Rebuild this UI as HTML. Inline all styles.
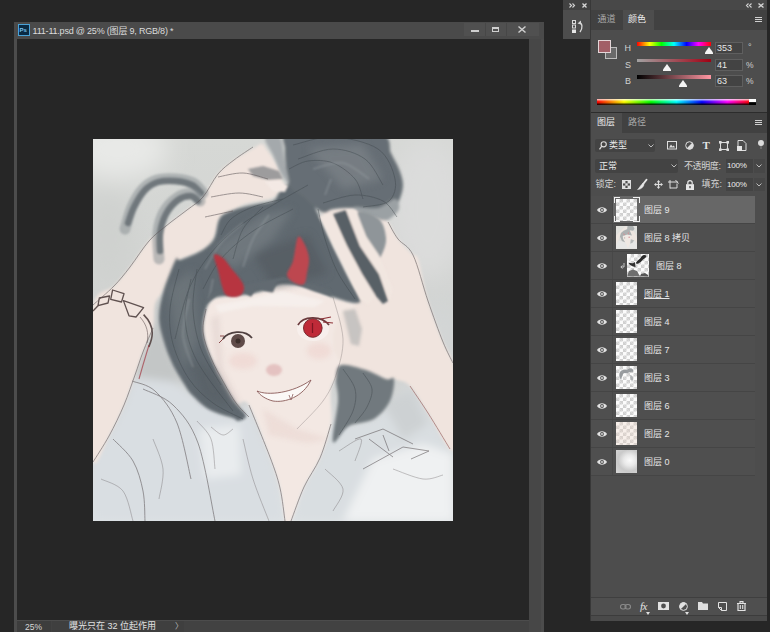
<!DOCTYPE html>
<html lang="zh">
<head>
<meta charset="utf-8">
<title>111-11.psd</title>
<style>
html,body{margin:0;padding:0;}
body{width:770px;height:632px;overflow:hidden;background:#262626;position:relative;
 font-family:"Liberation Sans","Noto Sans CJK SC",sans-serif;font-size:9px;color:#d6d6d6;}
.a{position:absolute;}
.t{position:absolute;white-space:nowrap;line-height:1;}
svg{position:absolute;overflow:visible;}
/* document window */
#win{left:14px;top:22px;width:530px;height:610px;background:#4c4c4c;}
#title{left:0;top:0;width:530px;height:17px;background:#4a4a4a;}
#canvas{left:3px;top:17px;width:512px;height:581px;background:#262626;}
#vscroll{left:515px;top:17px;width:12px;height:593px;background:#474747;}
#status{left:3px;top:598.5px;width:512px;height:12px;background:#424242;}
/* right dock */
#dock{left:590px;top:0;width:177px;height:621px;background:#4d4d4d;}
.tabbar{background:#414141;}
.row{left:0;width:165px;height:27px;background:#4f4f4f;border-bottom:1px solid #454545;}
.row.sel{background:#686868;}
.eye{left:7px;top:9px;width:10px;height:8px;}
.th{left:25.5px;top:2.5px;width:21.5px;height:22.5px;background:#f1f1f1;}
.ck{background-color:#fbfbfb;background-image:
 linear-gradient(45deg,#d0d0d0 25%,transparent 25%,transparent 75%,#d0d0d0 75%),
 linear-gradient(45deg,#d0d0d0 25%,transparent 25%,transparent 75%,#d0d0d0 75%);
 background-size:7px 7px;background-position:0 0,3.5px 3.5px;}
.nm{left:54px;top:10px;font-size:9px;color:#e6e6e6;}
.box{background:#434343;border:1px solid #5f5f5f;box-sizing:border-box;}
</style>
</head>
<body>

<!-- ================= document window ================= -->
<div id="win" class="a">
  <div id="title" class="a">
    <div class="a" style="left:4px;top:2px;width:10px;height:10px;background:#0a2a43;border:1px solid #4aa3d8;"></div>
    <div class="t" style="left:5.5px;top:5px;font-size:6px;color:#7cc4f0;font-weight:bold;">Ps</div>
    <div class="t" style="left:18.5px;top:5px;font-size:9px;color:#dcdcdc;letter-spacing:-0.2px;">111-11.psd @ 25% (图层 9, RGB/8) *</div>
    <!-- window buttons -->
    <div class="a" style="left:450px;top:1px;width:75px;height:13px;background:#505050;"></div>
    <div class="a" style="left:471px;top:1px;width:1px;height:13px;background:#474747;"></div>
    <div class="a" style="left:492px;top:1px;width:1px;height:13px;background:#474747;"></div>
    <div class="a" style="left:457px;top:8px;width:8px;height:2px;background:#cfcfcf;"></div>
    <div class="a" style="left:478px;top:5px;width:7px;height:5px;border:1px solid #cfcfcf;border-top-width:2px;box-sizing:border-box;"></div>
    <svg style="left:504px;top:4px;" width="8" height="7" viewBox="0 0 8 7"><path d="M0.5 0.5L7.5 6.5M7.5 0.5L0.5 6.5" stroke="#cfcfcf" stroke-width="1.5" fill="none"/></svg>
  </div>
  <div id="canvas" class="a"></div>
  <div id="vscroll" class="a"></div>
  <div id="status" class="a">
    <div class="a" style="left:0;top:0;width:34px;height:12px;background:#3d3d3d;"></div>
    <div class="a" style="left:35px;top:0;width:132px;height:12px;background:#3f3f3f;"></div>
    <div class="t" style="left:8px;top:2px;font-size:8.5px;color:#d8d8d8;">25%</div>
    <div class="t" style="left:52px;top:1.5px;font-size:9px;color:#e2e2e2;">曝光只在 32 位起作用</div>
    <div class="t" style="left:158px;top:2px;font-size:8px;color:#bdbdbd;">&#x232A;</div>
  </div>
</div>

<!-- ================= painting ================= -->
<svg id="art" style="left:93px;top:139px;overflow:hidden;" width="360" height="382" viewBox="0 0 360 382">
  <defs>
    <filter id="b0" x="-10%" y="-10%" width="120%" height="120%"><feGaussianBlur stdDeviation="0.45"/></filter>
    <filter id="b1" x="-10%" y="-10%" width="120%" height="120%"><feGaussianBlur stdDeviation="0.9"/></filter>
    <filter id="b2" x="-10%" y="-10%" width="120%" height="120%"><feGaussianBlur stdDeviation="1.5"/></filter>
    <filter id="b3" x="-20%" y="-20%" width="140%" height="140%"><feGaussianBlur stdDeviation="2.5"/></filter>
    <filter id="b4" x="-20%" y="-20%" width="140%" height="140%"><feGaussianBlur stdDeviation="4"/></filter>
    <filter id="b8" x="-30%" y="-30%" width="160%" height="160%"><feGaussianBlur stdDeviation="12"/></filter>
    <linearGradient id="bgg" x1="0" y1="0" x2="0" y2="1"><stop offset="0" stop-color="#d6d8d5"/><stop offset=".6" stop-color="#d0d2d1"/><stop offset="1" stop-color="#dfe3e5"/></linearGradient>
  </defs>
  <g id="artg">
  <rect width="360" height="382" fill="url(#bgg)"/>
  <g filter="url(#b8)">
    <ellipse cx="25" cy="10" rx="50" ry="30" fill="#e8e9e7"/>
    <ellipse cx="335" cy="70" rx="40" ry="70" fill="#dbdcdb"/>
    <ellipse cx="345" cy="220" rx="25" ry="60" fill="#d3d6d6"/>
    <ellipse cx="15" cy="100" rx="25" ry="50" fill="#cfd1cf"/>
  </g>
<g filter="url(#b4)">
<path d="M0 323L16 297L31 266L39 240L70 236L100 256L140 279L156 266L177 318L192 382H0Z" fill="#d9dee2"/>
<path d="M198 382L211 348L227 319L238 285L256 285L281 280L297 262L317 247L335 274L360 312V382Z" fill="#d9dee1"/>
<path d="M280 320L330 305L360 315V382H250Z" fill="#eff1f2"/>
<path d="M106 290L146 286L148 336L112 340Z" fill="#e9ecee"/>
<path d="M290 265L318 250L335 285L310 300Z" fill="#cdd1d3"/>
<path d="M62 165L72 150L68 180L73 205L90 244L42 238L50 213L60 189Z" fill="#c3c6c6"/>
</g>
<g filter="url(#b2)">
<path d="M0.0 166.0C4.8 148.8 14.8 153.3 21.0 147.0C27.2 140.7 31.2 135.5 37.0 128.0C42.8 120.5 50.0 108.8 56.0 102.0C62.0 95.2 66.7 92.2 73.0 87.0C79.3 81.8 87.8 75.8 94.0 71.0C100.2 66.2 104.8 64.0 110.0 58.0C115.2 52.0 119.8 41.2 125.0 35.0C130.2 28.8 135.0 25.3 141.0 21.0C147.0 16.7 156.3 11.7 161.0 9.0C165.7 6.3 166.8 4.7 169.0 5.0C171.2 5.3 171.7 7.8 174.0 11.0C176.3 14.2 180.7 19.8 183.0 24.0C185.3 28.2 187.0 32.3 188.0 36.0C189.0 39.7 189.8 42.5 189.0 46.0C188.2 49.5 186.0 54.5 183.0 57.0C180.0 59.5 176.2 59.7 171.0 61.0C165.8 62.3 157.0 63.3 152.0 65.0C147.0 66.7 145.2 68.7 141.0 71.0C136.8 73.3 130.3 74.2 127.0 79.0C123.7 83.8 124.2 94.5 121.0 100.0C117.8 105.5 113.7 108.5 108.0 112.0C102.3 115.5 91.5 118.0 87.0 121.0C82.5 124.0 83.7 125.0 81.0 130.0C78.3 135.0 74.2 145.2 71.0 151.0C67.8 156.8 63.8 158.7 62.0 165.0C60.2 171.3 62.0 181.0 60.0 189.0C58.0 197.0 53.0 205.2 50.0 213.0C47.0 220.8 45.2 227.2 42.0 236.0C38.8 244.8 35.3 255.8 31.0 266.0C26.7 276.2 21.2 287.5 16.0 297.0C10.8 306.5 4.0 330.8 0.0 323.0C-4.0 315.2 -8.0 276.2 -8.0 250.0C-8.0 223.8 -4.8 183.2 0.0 166.0Z" fill="#f0e4de" />
<path d="M113.0 170.0C114.7 164.5 117.0 162.2 120.0 160.0C123.0 157.8 125.0 157.8 131.0 157.0C137.0 156.2 148.5 156.2 156.0 155.0C163.5 153.8 170.5 151.7 176.0 150.0C181.5 148.3 182.7 145.3 189.0 145.0C195.3 144.7 205.5 145.8 214.0 148.0C222.5 150.2 232.0 155.3 240.0 158.0C248.0 160.7 255.3 162.7 262.0 164.0C268.7 165.3 273.7 153.3 280.0 166.0C286.3 178.7 306.2 227.7 300.0 240.0C293.8 252.3 253.3 232.5 243.0 240.0C232.7 247.5 240.7 271.8 238.0 285.0C235.3 298.2 231.5 308.5 227.0 319.0C222.5 329.5 215.8 337.5 211.0 348.0C206.2 358.5 201.2 376.3 198.0 382.0C194.8 387.7 193.8 387.5 192.0 382.0C190.2 376.5 189.5 359.7 187.0 349.0C184.5 338.3 182.2 331.8 177.0 318.0C171.8 304.2 161.7 275.0 156.0 266.0C150.3 257.0 147.2 267.7 143.0 264.0C138.8 260.3 135.2 251.5 131.0 244.0C126.8 236.5 121.5 227.5 118.0 219.0C114.5 210.5 110.8 201.2 110.0 193.0C109.2 184.8 111.3 175.5 113.0 170.0Z" fill="#f3e8e3" />
<path d="M229.0 73.0C227.2 64.5 234.8 69.8 241.0 69.0C247.2 68.2 258.7 67.5 266.0 68.0C273.3 68.5 280.2 69.5 285.0 72.0C289.8 74.5 291.7 78.3 295.0 83.0C298.3 87.7 300.8 94.5 305.0 100.0C309.2 105.5 316.7 112.7 320.0 116.0C323.3 119.3 322.5 112.3 325.0 120.0C327.5 127.7 330.8 148.2 335.0 162.0C339.2 175.8 345.8 192.7 350.0 203.0C354.2 213.3 357.0 212.8 360.0 224.0C363.0 235.2 368.0 255.3 368.0 270.0C368.0 284.7 365.5 311.3 360.0 312.0C354.5 312.7 342.2 284.8 335.0 274.0C327.8 263.2 322.7 252.7 317.0 247.0C311.3 241.3 311.8 243.5 301.0 240.0C290.2 236.5 262.2 232.7 252.0 226.0C241.8 219.3 240.3 209.0 240.0 200.0C239.7 191.0 246.3 178.0 250.0 172.0C253.7 166.0 261.7 172.7 262.0 164.0C262.3 155.3 257.5 135.2 252.0 120.0C246.5 104.8 230.8 81.5 229.0 73.0Z" fill="#f0e4de" />
</g>
<g filter="url(#b2)">
<path d="M83.0 120.0C85.7 115.0 82.8 122.3 87.0 121.0C91.2 119.7 102.3 115.5 108.0 112.0C113.7 108.5 117.8 105.5 121.0 100.0C124.2 94.5 123.7 83.8 127.0 79.0C130.3 74.2 135.5 73.2 141.0 71.0C146.5 68.8 153.5 67.5 160.0 66.0C166.5 64.5 175.7 64.0 180.0 62.0C184.3 60.0 183.8 56.7 186.0 54.0C188.2 51.3 188.7 46.3 193.0 46.0C197.3 45.7 206.5 46.8 212.0 52.0C217.5 57.2 221.3 67.8 226.0 77.0C230.7 86.2 234.8 96.3 240.0 107.0C245.2 117.7 252.5 132.2 257.0 141.0C261.5 149.8 266.2 156.2 267.0 160.0C267.8 163.8 266.5 164.3 262.0 164.0C257.5 163.7 248.0 160.7 240.0 158.0C232.0 155.3 222.5 150.2 214.0 148.0C205.5 145.8 195.3 144.7 189.0 145.0C182.7 145.3 181.5 148.3 176.0 150.0C170.5 151.7 163.5 153.8 156.0 155.0C148.5 156.2 137.0 156.2 131.0 157.0C125.0 157.8 123.0 157.8 120.0 160.0C117.0 162.2 114.7 164.5 113.0 170.0C111.3 175.5 109.2 184.8 110.0 193.0C110.8 201.2 114.5 210.5 118.0 219.0C121.5 227.5 126.8 236.5 131.0 244.0C135.2 251.5 139.3 258.5 143.0 264.0C146.7 269.5 152.7 274.0 153.0 277.0C153.3 280.0 147.2 281.7 145.0 282.0C142.8 282.3 144.7 280.8 140.0 279.0C135.3 277.2 123.8 274.8 117.0 271.0C110.2 267.2 103.3 260.3 99.0 256.0C94.7 251.7 94.3 250.3 91.0 245.0C87.7 239.7 82.3 231.0 79.0 224.0C75.7 217.0 73.2 210.7 71.0 203.0C68.8 195.3 66.0 186.7 66.0 178.0C66.0 169.3 68.2 160.7 71.0 151.0C73.8 141.3 80.3 125.0 83.0 120.0Z" fill="#60696f" />
<path d="M196.0 47.0C193.5 42.3 193.7 34.2 193.0 28.0C192.3 21.8 191.8 15.7 192.0 10.0C192.2 4.3 186.0 -2.7 194.0 -6.0C202.0 -9.3 224.0 -10.3 240.0 -10.0C256.0 -9.7 280.3 -8.0 290.0 -4.0C299.7 0.0 295.3 8.3 298.0 14.0C300.7 19.7 304.0 24.7 306.0 30.0C308.0 35.3 310.0 40.7 310.0 46.0C310.0 51.3 308.2 56.5 306.0 62.0C303.8 67.5 300.3 76.0 297.0 79.0C293.7 82.0 290.8 81.5 286.0 80.0C281.2 78.5 275.5 71.7 268.0 70.0C260.5 68.3 247.5 69.5 241.0 70.0C234.5 70.5 234.5 75.3 229.0 73.0C223.5 70.7 213.5 60.3 208.0 56.0C202.5 51.7 198.5 51.7 196.0 47.0Z" fill="#666e74" />
<path d="M172.0 0.0C172.0 -3.3 177.3 -4.0 180.0 -4.0C182.7 -4.0 186.0 -4.7 188.0 0.0C190.0 4.7 190.7 16.7 192.0 24.0C193.3 31.3 196.7 42.3 196.0 44.0C195.3 45.7 190.7 38.7 188.0 34.0C185.3 29.3 182.7 21.7 180.0 16.0C177.3 10.3 172.0 3.3 172.0 0.0Z" fill="#a4a9ac" />
<path d="M262.0 68.0C265.3 67.3 278.3 70.3 285.0 69.0C291.7 67.7 298.5 59.8 302.0 60.0C305.5 60.2 307.0 66.7 306.0 70.0C305.0 73.3 299.3 78.3 296.0 80.0C292.7 81.7 291.2 81.2 286.0 80.0C280.8 78.8 269.0 75.0 265.0 73.0C261.0 71.0 258.7 68.7 262.0 68.0Z" fill="#9ba1a4" />
<path d="M248.0 226.0C253.0 224.5 265.5 228.7 273.0 231.0C280.5 233.3 288.3 238.5 293.0 240.0C297.7 241.5 300.3 236.3 301.0 240.0C301.7 243.7 300.3 255.3 297.0 262.0C293.7 268.7 287.8 275.8 281.0 280.0C274.2 284.2 262.8 283.2 256.0 287.0C249.2 290.8 241.8 307.2 240.0 303.0C238.2 298.8 244.5 272.5 245.0 262.0C245.5 251.5 242.5 246.0 243.0 240.0C243.5 234.0 243.0 227.5 248.0 226.0Z" fill="#71797e" />
</g>
<g filter="url(#b1)" fill="none" stroke-linecap="round">
<path d="M32.0 90.0C33.2 86.3 36.0 74.7 39.0 68.0C42.0 61.3 45.8 54.5 50.0 50.0C54.2 45.5 58.5 42.7 64.0 41.0C69.5 39.3 77.0 39.5 83.0 40.0C89.0 40.5 95.5 41.7 100.0 44.0C104.5 46.3 108.3 52.3 110.0 54.0" stroke="#8d9498" stroke-width="11" opacity=".55"/>
<path d="M35.0 84.0C36.0 81.3 38.2 73.5 41.0 68.0C43.8 62.5 48.0 55.2 52.0 51.0C56.0 46.8 59.8 44.5 65.0 43.0C70.2 41.5 77.3 41.5 83.0 42.0C88.7 42.5 94.8 44.0 99.0 46.0C103.2 48.0 106.5 52.7 108.0 54.0" stroke="#6f777c" stroke-width="6.5"/>
<path d="M66.0 120.0C65.8 115.7 64.2 101.8 65.0 94.0C65.8 86.2 67.8 78.8 71.0 73.0C74.2 67.2 79.5 62.0 84.0 59.0C88.5 56.0 94.2 54.5 98.0 55.0C101.8 55.5 105.5 60.8 107.0 62.0" stroke="#8d9498" stroke-width="11" opacity=".55"/>
<path d="M67.0 112.0C67.0 109.0 66.0 100.2 67.0 94.0C68.0 87.8 70.0 80.5 73.0 75.0C76.0 69.5 80.8 64.0 85.0 61.0C89.2 58.0 94.7 56.8 98.0 57.0C101.3 57.2 103.8 61.2 105.0 62.0" stroke="#6f777c" stroke-width="6.5"/>
</g>
<g filter="url(#b1)">
<path d="M265.0 73.0C267.2 70.2 281.3 75.7 286.0 80.0C290.7 84.3 292.5 93.2 293.0 99.0C293.5 104.8 290.8 111.2 289.0 115.0C287.2 118.8 284.7 125.0 282.0 122.0C279.3 119.0 275.8 105.2 273.0 97.0C270.2 88.8 262.8 75.8 265.0 73.0Z" fill="#8f9599" />
<path d="M240 75L253 71L267 107L286 135L295 162L290 165L282 156L269 135L254 107Z" fill="#586066"/>
<path d="M226 77L238 75L254 107L269 135L282 156L276 166L267 160L257 141L240 107Z" fill="#f1e6e0"/>
<path d="M253 71L263 71L273 97L286 116L300 150L297 162L286 135L267 107Z" fill="#f1e6e0"/>
<path d="M155 30L170 27L186 32L190 40L175 41L160 37Z" fill="#8e8f92" opacity=".85"/>
<path d="M171 42L186 41L195 47L192 53L180 52Z" fill="#f3e9e4"/>
</g>
<g filter="url(#b4)" opacity=".75">
    <path d="M120 110L170 75L200 70L180 100L140 130Z" fill="#757d82"/>
    <path d="M75 150L100 130L105 200L90 230Z" fill="#70787d"/>
    <path d="M215 10L270 5L290 40L250 50Z" fill="#7b8287"/>
    <path d="M160 115L215 95L235 135L180 148Z" fill="#545c62"/>
    <path d="M95 220L120 230L140 270L110 260Z" fill="#586066"/>
  </g>
<g fill="none" stroke="#3f464b" stroke-width="0.8" opacity=".55" filter="url(#b0)">
<path d="M200.0 6.0C206.7 4.7 225.8 -2.7 240.0 -2.0C254.2 -1.3 274.7 3.0 285.0 10.0C295.3 17.0 300.2 31.3 302.0 40.0C303.8 48.7 301.3 57.3 296.0 62.0C290.7 66.7 274.3 67.0 270.0 68.0" />
<path d="M205.0 20.0C210.8 18.3 228.8 10.0 240.0 10.0C251.2 10.0 263.7 14.0 272.0 20.0C280.3 26.0 287.0 41.7 290.0 46.0" />
<path d="M190.0 60.0C185.0 61.3 168.7 64.7 160.0 68.0C151.3 71.3 143.3 75.3 138.0 80.0C132.7 84.7 129.7 93.3 128.0 96.0" />
<path d="M215.0 46.0C209.2 49.3 191.7 59.0 180.0 66.0C168.3 73.0 155.3 80.0 145.0 88.0C134.7 96.0 126.2 103.7 118.0 114.0C109.8 124.3 102.0 135.7 96.0 150.0C90.0 164.3 84.3 191.7 82.0 200.0" />
<path d="M200.0 70.0C193.3 73.7 172.0 83.7 160.0 92.0C148.0 100.3 136.3 110.3 128.0 120.0C119.7 129.7 113.0 145.0 110.0 150.0" />
<path d="M86.0 130.0C84.5 136.7 78.0 157.5 77.0 170.0C76.0 182.5 76.8 193.3 80.0 205.0C83.2 216.7 89.3 230.2 96.0 240.0C102.7 249.8 111.0 257.3 120.0 264.0C129.0 270.7 145.0 277.3 150.0 280.0" />
<path d="M98.0 140.0C97.0 146.7 91.0 166.3 92.0 180.0C93.0 193.7 96.0 206.7 104.0 222.0C112.0 237.3 134.0 263.7 140.0 272.0" />
<path d="M225.0 70.0C226.2 75.0 228.8 89.7 232.0 100.0C235.2 110.3 239.0 122.0 244.0 132.0C249.0 142.0 259.0 155.3 262.0 160.0" />
<path d="M250.0 230.0C252.0 233.3 260.3 243.0 262.0 250.0C263.7 257.0 262.7 264.3 260.0 272.0C257.3 279.7 248.3 292.0 246.0 296.0" />
<path d="M270.0 234.0C271.5 236.7 278.3 244.3 279.0 250.0C279.7 255.7 276.8 262.3 274.0 268.0C271.2 273.7 264.0 281.3 262.0 284.0" />
<path d="M196.0 30.0C199.2 28.7 207.7 23.0 215.0 22.0C222.3 21.0 232.2 21.0 240.0 24.0C247.8 27.0 257.0 34.0 262.0 40.0C267.0 46.0 268.7 56.7 270.0 60.0" />
<path d="M230.0 64.0C235.3 62.7 252.0 56.3 262.0 56.0C272.0 55.7 283.0 58.3 290.0 62.0C297.0 65.7 301.7 75.3 304.0 78.0" />
<path d="M170.0 68.0C166.7 71.7 155.0 81.3 150.0 90.0C145.0 98.7 141.7 115.0 140.0 120.0" />
<path d="M104.0 130.0C103.3 136.7 99.3 156.7 100.0 170.0C100.7 183.3 103.3 197.3 108.0 210.0C112.7 222.7 124.7 240.0 128.0 246.0" />
</g>
<g fill="none" stroke="#99a0a4" stroke-width="1.6" opacity=".5" filter="url(#b1)">
<path d="M150.0 84.0C146.3 87.3 134.3 96.3 128.0 104.0C121.7 111.7 114.7 125.7 112.0 130.0" />
<path d="M176.0 76.0C173.3 80.0 164.3 91.3 160.0 100.0C155.7 108.7 151.7 123.3 150.0 128.0" />
<path d="M96.0 160.0C95.0 166.0 89.3 184.7 90.0 196.0C90.7 207.3 98.3 222.7 100.0 228.0" />
<path d="M220.0 30.0C225.0 29.0 240.7 22.3 250.0 24.0C259.3 25.7 271.7 37.3 276.0 40.0" />
<path d="M238.0 40.0C237.0 42.7 233.0 53.3 232.0 56.0" />
<path d="M120.0 140.0C119.3 143.3 116.7 156.7 116.0 160.0" />
</g>
<g filter="url(#b1)">
<path d="M111 166L126 154L140 156L149 152L158 158L164 148L172 152L180 154L184 143L193 141L205 146L220 152L240 158L236 150L190 138L150 146L118 154Z" fill="#626b71"/>
</g>
<g filter="url(#b1)">
<path d="M121.0 116.0C121.8 114.0 127.2 116.8 130.0 119.0C132.8 121.2 135.2 125.5 138.0 129.0C140.8 132.5 144.8 136.8 147.0 140.0C149.2 143.2 150.7 145.5 151.0 148.0C151.3 150.5 150.5 153.3 149.0 155.0C147.5 156.7 144.7 157.8 142.0 158.0C139.3 158.2 135.2 157.8 133.0 156.0C130.8 154.2 130.3 151.2 129.0 147.0C127.7 142.8 126.3 136.2 125.0 131.0C123.7 125.8 120.2 118.0 121.0 116.0Z" fill="#b7343f" />
<path d="M205.0 98.0C207.0 95.3 210.2 102.3 212.0 106.0C213.8 109.7 215.7 115.3 216.0 120.0C216.3 124.7 214.8 129.8 214.0 134.0C213.2 138.2 213.0 143.3 211.0 145.0C209.0 146.7 204.8 145.5 202.0 144.0C199.2 142.5 194.3 139.7 194.0 136.0C193.7 132.3 198.2 128.3 200.0 122.0C201.8 115.7 203.0 100.7 205.0 98.0Z" fill="#bd4650" />
</g>
<g filter="url(#b2)"><path d="M122 166L156 160L189 152L232 162L222 168L160 167L126 174Z" fill="#f7f2ef" opacity=".7"/></g>
<g filter="url(#b3)" opacity=".4">
<ellipse cx="150" cy="222" rx="14" ry="8" fill="#ecc9c4"/>
<ellipse cx="226" cy="212" rx="12" ry="8" fill="#ecc9c4"/>
<path d="M118 180L126 176L130 230L150 268L140 262L124 232Z" fill="#d9c9c6"/>
<path d="M170 270L204 290L236 300L214 304L176 296Z" fill="#e6cfc9"/>
</g>
<g filter="url(#b0)">
    <ellipse cx="144" cy="202" rx="14" ry="9" fill="#f3e9e5"/>
    <circle cx="145" cy="202" r="7" fill="#5f4c48"/>
    <circle cx="145" cy="202" r="2.500" fill="#3a2d2b"/>
    <path d="M130 200C135 192 152 190 159 199" stroke="#4f3f3f" stroke-width="1.8" fill="none"/>
    <path d="M130 200L126 204M131 197L127 197" stroke="#8a4a4a" stroke-width="1" fill="none"/>
    <ellipse cx="220" cy="190" rx="16" ry="12" fill="#f7efec"/>
    <circle cx="219.800" cy="189" r="9.300" fill="#bf2b37" stroke="#7a2a30" stroke-width="1"/>
    <path d="M219.500 184V194" stroke="#7d1620" stroke-width="1.2"/>
    <path d="M205 186C210 177 228 176 236 186" stroke="#6a3a3c" stroke-width="1.8" fill="none"/>
    <path d="M228 180L238 178M230 183L240 184" stroke="#8c3036" stroke-width="1.2"/>
    <ellipse cx="181" cy="231" rx="8" ry="6" fill="#e4c2c1" filter="url(#b1)"/>
    <path d="M164 252C175 257 200 254 218 241C210 258 192 264 180 262C172 260 167 256 164 252Z" fill="#fbf8f6" stroke="#8a5a58" stroke-width="0.9"/>
    <path d="M196 256L198 261L200 255" stroke="#8a5a58" stroke-width=".8" fill="#fff"/>
  </g>
  <g filter="url(#b2)"><path d="M250 172L262 170L269 190L266 207L258 205Z" fill="#bdbbba" opacity=".8"/></g>
<g fill="none" stroke="#5c5457" stroke-width="0.8" opacity=".7" filter="url(#b0)">
<path d="M0.0 166.0C3.5 162.8 14.8 153.3 21.0 147.0C27.2 140.7 31.2 135.5 37.0 128.0C42.8 120.5 50.0 108.8 56.0 102.0C62.0 95.2 66.7 92.2 73.0 87.0C79.3 81.8 87.8 75.8 94.0 71.0C100.2 66.2 104.8 64.0 110.0 58.0C115.2 52.0 119.8 41.2 125.0 35.0C130.2 28.8 135.2 25.5 141.0 21.0C146.8 16.5 156.8 10.2 160.0 8.0" />
<path d="M60.0 189.0C58.3 193.0 53.0 205.2 50.0 213.0C47.0 220.8 45.2 227.2 42.0 236.0C38.8 244.8 35.3 255.8 31.0 266.0C26.7 276.2 21.2 287.5 16.0 297.0C10.8 306.5 2.7 318.7 0.0 323.0" />
<path d="M39.0 242.0C42.8 243.7 54.5 245.0 62.0 252.0C69.5 259.0 78.0 269.3 84.0 284.0C90.0 298.7 95.7 330.7 98.0 340.0" />
<path d="M50.0 250.0C55.0 252.7 70.8 257.0 80.0 266.0C89.2 275.0 98.0 284.7 105.0 304.0C112.0 323.3 119.2 369.0 122.0 382.0" />
<path d="M20.0 300.0C23.3 303.7 35.0 313.3 40.0 322.0C45.0 330.7 48.0 342.0 50.0 352.0C52.0 362.0 51.7 377.0 52.0 382.0" />
<path d="M156.0 266.0C159.5 274.7 171.8 304.2 177.0 318.0C182.2 331.8 184.5 338.3 187.0 349.0C189.5 359.7 191.2 376.5 192.0 382.0" />
<path d="M238.0 285.0C236.2 290.7 231.5 308.5 227.0 319.0C222.5 329.5 215.8 337.5 211.0 348.0C206.2 358.5 200.2 376.3 198.0 382.0" />
<path d="M295.0 83.0C296.7 85.8 300.8 94.5 305.0 100.0C309.2 105.5 315.0 105.7 320.0 116.0C325.0 126.3 330.0 147.5 335.0 162.0C340.0 176.5 345.8 192.7 350.0 203.0C354.2 213.3 358.3 220.5 360.0 224.0" />
<path d="M113.0 170.0C112.5 173.8 109.2 184.8 110.0 193.0C110.8 201.2 114.5 210.5 118.0 219.0C121.5 227.5 126.8 236.5 131.0 244.0C135.2 251.5 138.8 258.3 143.0 264.0C147.2 269.7 153.8 275.7 156.0 278.0" />
<path d="M125.0 38.0C129.2 37.3 141.7 33.7 150.0 34.0C158.3 34.3 170.8 39.0 175.0 40.0" />
<path d="M118.0 58.0C122.7 57.3 137.3 54.0 146.0 54.0C154.7 54.0 166.0 57.3 170.0 58.0" />
<path d="M112.0 78.0C116.7 77.0 135.3 73.0 140.0 72.0" />
<path d="M317.0 247.0C320.0 251.5 328.3 263.5 335.0 274.0C341.7 284.5 353.3 304.0 357.0 310.0" stroke="#8a4a48"/>
<path d="M104.0 282.0C106.3 285.0 115.0 292.0 118.0 300.0C121.0 308.0 121.3 325.0 122.0 330.0" opacity=".6"/>
<path d="M118.0 288.0C120.0 289.3 126.3 295.7 130.0 296.0C133.7 296.3 138.3 291.0 140.0 290.0" opacity=".6"/>
<path d="M60.0 300.0C61.7 305.0 69.0 320.0 70.0 330.0C71.0 340.0 66.7 355.0 66.0 360.0" opacity=".6"/>
<path d="M150.0 300.0C151.7 306.7 155.7 326.3 160.0 340.0C164.3 353.7 173.3 375.0 176.0 382.0" opacity=".6"/>
<path d="M232.0 330.0C235.0 333.3 248.7 343.0 250.0 350.0C251.3 357.0 241.7 368.3 240.0 372.0" opacity=".6"/>
<path d="M246.0 312.0C249.7 310.0 265.3 298.3 268.0 300.0C270.7 301.7 263.0 318.3 262.0 322.0" opacity=".6"/>
<path d="M300.0 330.0C305.0 331.7 321.7 339.0 330.0 340.0C338.3 341.0 346.7 336.7 350.0 336.0" opacity=".6"/>
<path d="M8.0 340.0C11.7 342.0 24.7 345.0 30.0 352.0C35.3 359.0 38.3 377.0 40.0 382.0" opacity=".6"/>
<path d="M262 300L290 290L320 305M270 330L310 308L336 312L318 320M276 300L300 318M290 296L296 312"/>
<path d="M240.0 158.0C241.7 165.0 249.5 187.0 250.0 200.0C250.5 213.0 246.3 225.7 243.0 236.0C239.7 246.3 236.5 253.0 230.0 262.0C223.5 271.0 208.3 285.3 204.0 290.0" opacity=".5"/>
</g>
<g fill="none" stroke="#5f5150" stroke-width="1.3" filter="url(#b0)" stroke-linejoin="round">
    <path d="M19.600 151L31 154.700L28.500 163L17.700 160.400Z"/>
    <path d="M30.400 161.600L50.600 168.600L43 178L36 176.800Z"/>
    <path d="M6.300 159L16.500 157L15 164L5 166.700Z"/>
    <path d="M0 172L5 166.700"/>
    <path d="M50.600 175.600C58 183 60.500 192 58.500 200C57.500 204 56.500 206 55.700 208" stroke-width="1.6"/>
    <path d="M47 178C54 186 56 194 54 204" stroke-width=".8" opacity=".7"/>
  </g>
  <path d="M56 206L50 226L46 240" stroke="#a33a44" stroke-width="1.1" fill="none" opacity=".7"/>
  </g>
</svg>

<!-- ================= collapsed history panel ================= -->
<div class="a" style="left:562.5px;top:0;width:27px;height:39px;background:#4d4d4d;">
  <div class="a tabbar" style="left:0;top:0;width:27px;height:9.500px;background:#424242;"></div>
  <svg style="left:6px;top:3px;" width="6" height="5" viewBox="0 0 6 5"><path d="M0.5 0.5L2.5 2.5L0.5 4.5M3.5 0.5L5.5 2.5L3.5 4.5" stroke="#d4d4d4" stroke-width="1.1" fill="none"/></svg>
  <svg style="left:19px;top:3px;" width="5" height="5" viewBox="0 0 5 5"><path d="M0.5 0.5L4.5 4.5M4.5 0.5L0.5 4.5" stroke="#d8d8d8" stroke-width="1.3"/></svg>
  <svg style="left:9px;top:20px;" width="12" height="13" viewBox="0 0 12 13">
    <rect x="0.5" y="0.5" width="3" height="3" fill="none" stroke="#d8d8d8" stroke-width="1"/>
    <rect x="0.5" y="5" width="3" height="3" fill="none" stroke="#d8d8d8" stroke-width="1"/>
    <rect x="0" y="9.5" width="4" height="3.5" fill="#e6e6e6"/>
    <path d="M7 2.5C10.5 3 11 8 8 12" fill="none" stroke="#d8d8d8" stroke-width="1.3"/>
    <path d="M5.5 3.5L9 0.5L9 4.5Z" fill="#d8d8d8"/>
  </svg>
</div>

<!-- ================= right dock ================= -->
<div id="dock" class="a">
  <!-- top strip -->
  <div class="a" style="left:0;top:0;width:177px;height:10px;background:#484848;"></div>
  <svg style="left:155.5px;top:3px;" width="6" height="5" viewBox="0 0 6 5"><path d="M2.5 0.5L0.5 2.5L2.5 4.5M5.5 0.5L3.5 2.5L5.5 4.5" stroke="#d4d4d4" stroke-width="1.1" fill="none"/></svg>
  <svg style="left:168px;top:3px;" width="6" height="5" viewBox="0 0 6 5"><path d="M0.5 0.5L5.5 4.5M5.5 0.5L0.5 4.5" stroke="#d8d8d8" stroke-width="1.4"/></svg>

  <!-- color panel tabs -->
  <div class="a tabbar" style="left:0;top:10px;width:177px;height:20px;"></div>
  <div class="a" style="left:33px;top:10px;width:31px;height:20px;background:#4d4d4d;"></div>
  <div class="t" style="left:7.5px;top:15px;font-size:9px;color:#a9a9a9;">通道</div>
  <div class="t" style="left:38px;top:15px;font-size:9px;color:#ededed;">颜色</div>
  <div class="a" style="left:165px;top:17px;width:7px;height:1px;background:#d0d0d0;box-shadow:0 2px 0 #d0d0d0,0 4px 0 #d0d0d0;"></div>

  <!-- swatches -->
  <div class="a" style="left:15px;top:47px;width:12px;height:12px;background:#6a6a6a;border:1px solid #bdbdbd;box-sizing:border-box;"></div>
  <div class="a" style="left:8px;top:40px;width:13px;height:13px;background:#a25f67;border:1px solid #e4d6d8;box-sizing:border-box;"></div>

  <div class="t" style="left:34.5px;top:44px;font-size:9px;color:#d2d2d2;">H</div>
  <div class="t" style="left:35px;top:60.5px;font-size:9px;color:#d2d2d2;">S</div>
  <div class="t" style="left:35px;top:77px;font-size:9px;color:#d2d2d2;">B</div>

  <div class="a" style="left:47px;top:42px;width:74px;height:4px;background:linear-gradient(90deg,#f00 0%,#ff0 17%,#0f0 33%,#0ff 50%,#00f 67%,#f0f 83%,#f00 100%);"></div>
  <div class="a" style="left:47px;top:59px;width:74px;height:3px;background:linear-gradient(90deg,#a1a1a1,#a10013);"></div>
  <div class="a" style="left:47px;top:75px;width:74px;height:3.5px;background:linear-gradient(90deg,#000,#ff96a2);"></div>
  <svg style="left:114.5px;top:47px;" width="8" height="7" viewBox="0 0 8 7"><path d="M4 0L8 5.5V7H0V5.5Z" fill="#f4f4f4"/></svg>
  <svg style="left:73px;top:63.5px;" width="8" height="7" viewBox="0 0 8 7"><path d="M4 0L8 5.5V7H0V5.5Z" fill="#f4f4f4"/></svg>
  <svg style="left:88.5px;top:80px;" width="8" height="7" viewBox="0 0 8 7"><path d="M4 0L8 5.5V7H0V5.5Z" fill="#f4f4f4"/></svg>

  <div class="a box" style="left:125px;top:42px;width:28px;height:12px;"></div>
  <div class="a box" style="left:125px;top:58.5px;width:28px;height:12px;"></div>
  <div class="a box" style="left:125px;top:75px;width:28px;height:12px;"></div>
  <div class="t" style="left:127px;top:44px;font-size:9px;color:#e8e8e8;">353</div>
  <div class="t" style="left:127px;top:60.5px;font-size:9px;color:#e8e8e8;">41</div>
  <div class="t" style="left:127px;top:77px;font-size:9px;color:#e8e8e8;">63</div>
  <div class="t" style="left:158px;top:43px;font-size:9px;color:#cfcfcf;">°</div>
  <div class="t" style="left:156px;top:60.5px;font-size:8.5px;color:#cfcfcf;">%</div>
  <div class="t" style="left:156px;top:77px;font-size:8.5px;color:#cfcfcf;">%</div>

  <!-- spectrum -->
  <div class="a" style="left:6.5px;top:98.5px;width:159px;height:6px;background:linear-gradient(90deg,#f00 0%,#ff0 17%,#0f0 34%,#0ff 50%,#00f 66%,#f0f 82%,#f00 96%,#f00 100%);"></div>
  <div class="a" style="left:6.5px;top:98.5px;width:159px;height:6px;background:linear-gradient(180deg,rgba(255,255,255,.85) 0%,rgba(255,255,255,.25) 30%,rgba(255,255,255,0) 45%,rgba(0,0,0,0) 55%,rgba(0,0,0,.45) 75%,rgba(0,0,0,.95) 100%);"></div>
  <div class="a" style="left:159px;top:98.5px;width:6.5px;height:6px;background:linear-gradient(180deg,#fff 0%,#fff 45%,#000 60%,#000 100%);"></div>

  <!-- gap -->
  <div class="a" style="left:0;top:111.5px;width:177px;height:1.5px;background:#2c2c2c;"></div>

  <!-- layers tabs -->
  <div class="a tabbar" style="left:0;top:113px;width:177px;height:20px;"></div>
  <div class="a" style="left:0;top:113px;width:31.5px;height:20px;background:#4d4d4d;"></div>
  <div class="t" style="left:7px;top:118px;font-size:9px;color:#ededed;">图层</div>
  <div class="t" style="left:38px;top:118px;font-size:9px;color:#a9a9a9;">路径</div>
  <div class="a" style="left:165px;top:120px;width:7px;height:1px;background:#d0d0d0;box-shadow:0 2px 0 #d0d0d0,0 4px 0 #d0d0d0;"></div>

  <!-- filter row -->
  <div class="a" style="left:4.5px;top:139px;width:60.5px;height:13px;background:#434343;border-radius:2px;"></div>
  <svg style="left:9px;top:141px;" width="8" height="9" viewBox="0 0 8 9"><circle cx="4.7" cy="3.3" r="2.6" fill="none" stroke="#dcdcdc" stroke-width="1.1"/><path d="M2.8 5.2L0.5 8.3" stroke="#dcdcdc" stroke-width="1.3"/></svg>
  <div class="t" style="left:19px;top:141px;font-size:9px;color:#e8e8e8;">类型</div>
  <svg style="left:58px;top:143.5px;" width="6" height="4" viewBox="0 0 6 4"><path d="M0.5 0.5L3 3L5.5 0.5" stroke="#bdbdbd" fill="none" stroke-width="1"/></svg>
  <!-- filter icons -->
  <svg style="left:76.5px;top:141px;" width="10" height="9" viewBox="0 0 10 9"><rect x="0.5" y="0.5" width="9" height="7.5" fill="none" stroke="#dedede"/><path d="M2 6.5L4 3.5L5.5 5.5L6.8 4.5L8 6.5Z" fill="#dedede"/></svg>
  <svg style="left:94.5px;top:141px;" width="9" height="9" viewBox="0 0 9 9"><circle cx="4.5" cy="4.5" r="3.8" fill="none" stroke="#dedede"/><path d="M7.2 1.8A3.8 3.8 0 0 1 1.8 7.2Z" fill="#dedede"/></svg>
  <div class="t" style="left:112.5px;top:140px;font-family:'Liberation Serif',serif;font-weight:bold;font-size:11px;color:#e6e6e6;">T</div>
  <svg style="left:129px;top:140.5px;" width="10" height="10" viewBox="0 0 10 10"><rect x="1.5" y="1.5" width="7" height="7" fill="none" stroke="#dedede"/><rect x="0" y="0" width="2.6" height="2.6" fill="#dedede"/><rect x="7.4" y="0" width="2.6" height="2.6" fill="#dedede"/><rect x="0" y="7.4" width="2.6" height="2.6" fill="#dedede"/><rect x="7.4" y="7.4" width="2.6" height="2.6" fill="#dedede"/></svg>
  <svg style="left:146.5px;top:140px;" width="10" height="11" viewBox="0 0 10 11"><path d="M1 0.5H6L9 3.5V10.5H1Z" fill="none" stroke="#dedede"/><rect x="0" y="6" width="5" height="5" fill="#e6e6e6"/></svg>
  <div class="a" style="left:170.3px;top:143px;width:1.4px;height:6px;background:#6a6a6a;"></div>
  <div class="a" style="left:168.2px;top:140px;width:5.6px;height:5.6px;border-radius:3px;background:#dcdcdc;"></div>

  <!-- blend row -->
  <div class="a" style="left:4.5px;top:159px;width:83px;height:13.5px;background:#434343;border-radius:2px;"></div>
  <div class="t" style="left:9px;top:161.5px;font-size:9px;color:#e8e8e8;">正常</div>
  <svg style="left:80.5px;top:164px;" width="6" height="4" viewBox="0 0 6 4"><path d="M0.5 0.5L3 3L5.5 0.5" stroke="#bdbdbd" fill="none" stroke-width="1"/></svg>
  <div class="t" style="left:94px;top:161.5px;font-size:9px;color:#d4d4d4;letter-spacing:-0.4px;">不透明度:</div>
  <div class="a" style="left:135.5px;top:159px;width:27px;height:13.5px;background:#434343;"></div>
  <div class="a" style="left:163.5px;top:159px;width:11px;height:13.5px;background:#474747;"></div>
  <div class="t" style="left:137px;top:162px;font-size:8px;color:#ececec;letter-spacing:-0.2px;">100%</div>
  <svg style="left:166px;top:164px;" width="6" height="4" viewBox="0 0 6 4"><path d="M0.5 0.5L3 3L5.5 0.5" stroke="#bdbdbd" fill="none" stroke-width="1"/></svg>

  <!-- lock row -->
  <div class="t" style="left:5.5px;top:180px;font-size:9px;color:#d4d4d4;">锁定:</div>
  <svg style="left:32px;top:180px;" width="9" height="9" viewBox="0 0 9 9"><rect x="0.5" y="0.5" width="8" height="8" fill="none" stroke="#dedede"/><rect x="1" y="1" width="2.4" height="2.4" fill="#dedede"/><rect x="5.6" y="1" width="2.4" height="2.4" fill="#dedede"/><rect x="3.3" y="3.3" width="2.4" height="2.4" fill="#dedede"/><rect x="1" y="5.6" width="2.4" height="2.4" fill="#dedede"/><rect x="5.6" y="5.6" width="2.4" height="2.4" fill="#dedede"/></svg>
  <svg style="left:47px;top:179px;" width="11" height="11" viewBox="0 0 11 11"><path d="M9.6 0.6L5.6 5.6" stroke="#e6e6e6" stroke-width="1.7" stroke-linecap="round"/><path d="M5.8 4.6L7 5.8C6.2 8 4 10.5 0.6 10.6C2.6 9 3.4 6.2 5.8 4.6Z" fill="#e6e6e6" stroke="#e6e6e6" stroke-width=".6"/></svg>
  <svg style="left:63.5px;top:180px;" width="9" height="9" viewBox="0 0 9 9"><path d="M4.5 0L6.3 2.2H5.1V3.9H6.8V2.7L9 4.5L6.8 6.3V5.1H5.1V6.8H6.3L4.5 9L2.7 6.8H3.9V5.1H2.2V6.3L0 4.5L2.2 2.7V3.9H3.9V2.2H2.7Z" fill="#dedede"/></svg>
  <svg style="left:78px;top:180px;" width="11" height="9" viewBox="0 0 11 9"><path d="M2 0V8.5M0 2H10M2 8H9V3.5" fill="none" stroke="#dedede"/><path d="M7.5 0L10.5 3.5" stroke="#dedede"/></svg>
  <svg style="left:96px;top:179.5px;" width="8" height="10" viewBox="0 0 8 10"><rect x="0" y="4.2" width="8" height="5.8" fill="#e6e6e6"/><rect x="3.3" y="6" width="1.4" height="2.2" fill="#4d4d4d"/><path d="M1.8 4.5V2.8A2.2 2.2 0 0 1 6.2 2.8V4.5" fill="none" stroke="#e6e6e6" stroke-width="1.2"/></svg>
  <div class="t" style="left:111.5px;top:180px;font-size:9px;color:#d4d4d4;">填充:</div>
  <div class="a" style="left:135.5px;top:178px;width:27px;height:13px;background:#434343;"></div>
  <div class="a" style="left:163.5px;top:178px;width:11px;height:13px;background:#474747;"></div>
  <div class="t" style="left:137px;top:181px;font-size:8px;color:#ececec;letter-spacing:-0.2px;">100%</div>
  <svg style="left:166px;top:183px;" width="6" height="4" viewBox="0 0 6 4"><path d="M0.5 0.5L3 3L5.5 0.5" stroke="#bdbdbd" fill="none" stroke-width="1"/></svg>

  <!-- LAYERS -->
  <div id="layers" class="a" style="left:0;top:195.500px;width:164px;height:281px;">
<div class="a row" style="top:0px;"><div class="a" style="left:22.5px;top:0;width:142.5px;height:27px;background:#676767;"></div><svg class="eye" style="left:7px;top:10.5px;" width="10" height="8" viewBox="0 0 10 8"><path d="M0 4C2 0.3 8 0.3 10 4C8 7.7 2 7.7 0 4Z" fill="#e2e2e2"/><circle cx="5" cy="4" r="1.9" fill="#4e4e4e"/><circle cx="5" cy="4" r="0.9" fill="#e2e2e2"/></svg><div class="a" style="left:21.5px;top:0;width:1px;height:27px;background:#484848;"></div><div class="a" style="left:23.5px;top:1px;width:26px;height:25.500px;background:#f2f2f2;"></div><div class="a" style="left:23.5px;top:7px;width:26px;height:13px;background:#676767;"></div><div class="a" style="left:30px;top:1px;width:13px;height:25.500px;background:#676767;"></div><div class="a" style="left:24.5px;top:2px;width:24px;height:23.500px;background:#676767;"></div><div class="a th ck" style="left:26px;top:3px;width:21px;height:22px;"></div><div class="nm t" style="left:54px;">图层 9</div></div>
<div class="a row" style="top:28px;"><svg class="eye" style="left:7px;top:10.5px;" width="10" height="8" viewBox="0 0 10 8"><path d="M0 4C2 0.3 8 0.3 10 4C8 7.7 2 7.7 0 4Z" fill="#e2e2e2"/><circle cx="5" cy="4" r="1.9" fill="#4e4e4e"/><circle cx="5" cy="4" r="0.9" fill="#e2e2e2"/></svg><div class="a" style="left:21.5px;top:0;width:1px;height:27px;background:#484848;"></div><div class="a th" style="left:25.5px;top:2.5px;width:21.5px;height:22.5px;background:#dcdad6;overflow:hidden;"><svg width="21.5" height="22.5" viewBox="0 0 360 382" preserveAspectRatio="none" style="left:0;top:0;"><rect width="360" height="382" fill="#d9dad8"/><path d="M0 320L40 240L150 280L200 300L300 240L360 300V382H0Z" fill="#e3e6e8"/><path d="M0 166L125 35L170 5L195 47L127 79L71 151L42 236L0 323Z" fill="#efe3dd"/><path d="M229 73L295 83L335 162L360 224V312L317 247L252 226Z" fill="#efe3dd"/><path d="M113 170L189 145L280 166L243 240L227 319L198 382L177 318L131 244Z" fill="#f2e7e2"/><path d="M83 120L127 79L186 54L194 0H287L310 46L286 80L229 73L267 160L189 145L113 170L118 219L153 277L99 256L66 178Z" fill="#7b8388"/><path d="M248 226L301 240L281 280L240 303Z" fill="#8b9296"/><circle cx="220" cy="190" r="12" fill="#c24a55"/><circle cx="145" cy="202" r="9" fill="#7a6662"/><path d="M121 116L151 148L142 158L129 147Z" fill="#bd4a54"/><path d="M205 98L216 120L211 145L194 136Z" fill="#bd4a54"/></svg><div class="a" style="left:0;top:0;width:22px;height:23px;background:rgba(235,232,228,.45);"></div></div><div class="nm t" style="left:54px;">图层 8 拷贝</div></div>
<div class="a row" style="top:56px;"><svg class="eye" style="left:7px;top:10.5px;" width="10" height="8" viewBox="0 0 10 8"><path d="M0 4C2 0.3 8 0.3 10 4C8 7.7 2 7.7 0 4Z" fill="#e2e2e2"/><circle cx="5" cy="4" r="1.9" fill="#4e4e4e"/><circle cx="5" cy="4" r="0.9" fill="#e2e2e2"/></svg><div class="a" style="left:21.5px;top:0;width:1px;height:27px;background:#484848;"></div><svg style="left:30px;top:11px;" width="5" height="6" viewBox="0 0 5 6"><path d="M4 0V4H1M2.5 2.5L0.8 4L2.5 5.5" stroke="#cfcfcf" stroke-width=".9" fill="none"/></svg><div class="a th ck" style="left:37px;top:2.5px;width:22px;height:22.5px;overflow:hidden;"><svg width="22" height="22.5" viewBox="0 0 22 22.5" style="left:0;top:0;"><path d="M9 8.500C11 6 13 5 14.500 2.500C16 0.500 18.500 0.500 19.500 2C19 4 17 4.500 15.500 6C14 8 12 9.500 9.500 10Z" fill="#2b2b2b"/><path d="M1 8.500C3 9 5 9.500 6.500 9L8 8L8.500 13L6 12.500C4 11.500 2 10.500 1 8.500Z" fill="#303030"/><path d="M0 22.500L2 17L6 15.500L10 17L13 22.500Z" fill="#6e6e6e"/><path d="M14 20L18 19L21 21L22 22.500H13Z" fill="#555"/><path d="M0 0H4L2 8L0 12Z" fill="#fff" opacity=".8"/></svg></div><div class="nm t" style="left:66px;">图层 8</div></div>
<div class="a row" style="top:84px;"><svg class="eye" style="left:7px;top:10.5px;" width="10" height="8" viewBox="0 0 10 8"><path d="M0 4C2 0.3 8 0.3 10 4C8 7.7 2 7.7 0 4Z" fill="#e2e2e2"/><circle cx="5" cy="4" r="1.9" fill="#4e4e4e"/><circle cx="5" cy="4" r="0.9" fill="#e2e2e2"/></svg><div class="a" style="left:21.5px;top:0;width:1px;height:27px;background:#484848;"></div><div class="a th ck"></div><div class="nm t" style="left:54px;text-decoration:underline;">图层 1</div></div>
<div class="a row" style="top:112px;"><svg class="eye" style="left:7px;top:10.5px;" width="10" height="8" viewBox="0 0 10 8"><path d="M0 4C2 0.3 8 0.3 10 4C8 7.7 2 7.7 0 4Z" fill="#e2e2e2"/><circle cx="5" cy="4" r="1.9" fill="#4e4e4e"/><circle cx="5" cy="4" r="0.9" fill="#e2e2e2"/></svg><div class="a" style="left:21.5px;top:0;width:1px;height:27px;background:#484848;"></div><div class="a th ck"></div><div class="nm t" style="left:54px;">图层 4</div></div>
<div class="a row" style="top:140px;"><svg class="eye" style="left:7px;top:10.5px;" width="10" height="8" viewBox="0 0 10 8"><path d="M0 4C2 0.3 8 0.3 10 4C8 7.7 2 7.7 0 4Z" fill="#e2e2e2"/><circle cx="5" cy="4" r="1.9" fill="#4e4e4e"/><circle cx="5" cy="4" r="0.9" fill="#e2e2e2"/></svg><div class="a" style="left:21.5px;top:0;width:1px;height:27px;background:#484848;"></div><div class="a th ck"></div><div class="nm t" style="left:54px;">图层 7</div></div>
<div class="a row" style="top:168px;"><svg class="eye" style="left:7px;top:10.5px;" width="10" height="8" viewBox="0 0 10 8"><path d="M0 4C2 0.3 8 0.3 10 4C8 7.7 2 7.7 0 4Z" fill="#e2e2e2"/><circle cx="5" cy="4" r="1.9" fill="#4e4e4e"/><circle cx="5" cy="4" r="0.9" fill="#e2e2e2"/></svg><div class="a" style="left:21.5px;top:0;width:1px;height:27px;background:#484848;"></div><div class="a th ck"></div><svg style="left:25.5px;top:2.5px;" width="22" height="23" viewBox="0 0 22 23"><path d="M4 6C7 2 10 5 12 3C15 1 18 3 17 6C14 5 12 8 9 7C6 7 6 12 5 14C3 11 3 8 4 6Z" fill="#8f9497" opacity=".9"/><path d="M14 9C17 9 18 13 16 16C15 13 14 12 14 9Z" fill="#a5a9ab" opacity=".8"/></svg><div class="nm t" style="left:54px;">图层 3</div></div>
<div class="a row" style="top:196px;"><svg class="eye" style="left:7px;top:10.5px;" width="10" height="8" viewBox="0 0 10 8"><path d="M0 4C2 0.3 8 0.3 10 4C8 7.7 2 7.7 0 4Z" fill="#e2e2e2"/><circle cx="5" cy="4" r="1.9" fill="#4e4e4e"/><circle cx="5" cy="4" r="0.9" fill="#e2e2e2"/></svg><div class="a" style="left:21.5px;top:0;width:1px;height:27px;background:#484848;"></div><div class="a th ck"></div><div class="nm t" style="left:54px;">图层 6</div></div>
<div class="a row" style="top:224px;"><svg class="eye" style="left:7px;top:10.5px;" width="10" height="8" viewBox="0 0 10 8"><path d="M0 4C2 0.3 8 0.3 10 4C8 7.7 2 7.7 0 4Z" fill="#e2e2e2"/><circle cx="5" cy="4" r="1.9" fill="#4e4e4e"/><circle cx="5" cy="4" r="0.9" fill="#e2e2e2"/></svg><div class="a" style="left:21.5px;top:0;width:1px;height:27px;background:#484848;"></div><div class="a th ck"></div><div class="a th" style="background:rgba(240,214,200,.32);"></div><div class="nm t" style="left:54px;">图层 2</div></div>
<div class="a row" style="top:252px;"><svg class="eye" style="left:7px;top:10.5px;" width="10" height="8" viewBox="0 0 10 8"><path d="M0 4C2 0.3 8 0.3 10 4C8 7.7 2 7.7 0 4Z" fill="#e2e2e2"/><circle cx="5" cy="4" r="1.9" fill="#4e4e4e"/><circle cx="5" cy="4" r="0.9" fill="#e2e2e2"/></svg><div class="a" style="left:21.5px;top:0;width:1px;height:27px;background:#484848;"></div><div class="a th" style="background:radial-gradient(ellipse at 65% 45%,#fbfbfb 0%,#e9e9e9 30%,#c9c9c9 60%,#d8d8d8 100%);"></div><div class="nm t" style="left:54px;">图层 0</div></div>
  </div>

  <!-- bottom bar -->
  <div class="a" style="left:0;top:597px;width:177px;height:1px;background:#3f3f3f;"></div>
  <div class="a" style="left:0;top:598px;width:177px;height:17px;background:#4f4f4f;"></div>
  <div class="a" style="left:0;top:615px;width:177px;height:1px;background:#3c3c3c;"></div>
  <div class="a" style="left:0;top:616px;width:177px;height:5px;background:#4a4a4a;"></div>
  <div id="bicons" class="a" style="left:0;top:598px;width:177px;height:17px;">
    <svg style="left:30px;top:5.5px;" width="11" height="6" viewBox="0 0 11 6"><rect x="0.5" y="0.5" width="5.5" height="4.5" rx="2.2" fill="none" stroke="#8a8a8a" stroke-width="1.1"/><rect x="5" y="0.5" width="5.5" height="4.5" rx="2.2" fill="none" stroke="#8a8a8a" stroke-width="1.1"/></svg>
    <div class="t" style="left:50px;top:2.5px;font-family:'Liberation Serif',serif;font-style:italic;font-size:11px;color:#e4e4e4;letter-spacing:-0.5px;">fx</div>
    <svg style="left:56px;top:13.5px;" width="4" height="3" viewBox="0 0 4 3"><path d="M0 0H4L2 3Z" fill="#e0e0e0"/></svg>
    <svg style="left:68px;top:3.5px;" width="11" height="8" viewBox="0 0 11 8"><rect width="11" height="8" fill="#e2e2e2"/><circle cx="5.5" cy="4" r="2.4" fill="#4f4f4f"/></svg>
    <svg style="left:89px;top:3.5px;" width="9" height="9" viewBox="0 0 9 9"><circle cx="4.5" cy="4.5" r="3.9" fill="none" stroke="#e2e2e2"/><path d="M1.7 7.3A3.9 3.9 0 0 1 7.3 1.7Z" fill="#e2e2e2"/></svg>
    <svg style="left:95px;top:13.5px;" width="4" height="3" viewBox="0 0 4 3"><path d="M0 0H4L2 3Z" fill="#e0e0e0"/></svg>
    <svg style="left:108px;top:3.5px;" width="10" height="8" viewBox="0 0 10 8"><path d="M0 0H4L5 1.5H10V8H0Z" fill="#dedede"/></svg>
    <svg style="left:128px;top:3.5px;" width="9" height="9" viewBox="0 0 9 9"><path d="M0.5 0.5H8.5V8.5H3.5L0.5 5.5Z" fill="none" stroke="#e2e2e2"/><path d="M0.5 5.5H3.5V8.5" fill="none" stroke="#e2e2e2"/></svg>
    <svg style="left:147px;top:2.5px;" width="9" height="10" viewBox="0 0 9 10"><path d="M1 2.5H8V9.5H1Z" fill="none" stroke="#e2e2e2" stroke-width="1.2"/><path d="M0 2.5H9M3 2.5V0.6H6V2.5M3.3 4V8M5.7 4V8" fill="none" stroke="#e2e2e2" stroke-width="1.1"/></svg>
  </div>
  <div class="a" style="left:0;top:0;width:1px;height:621px;background:#383838;"></div>
</div>

</body>
</html>
